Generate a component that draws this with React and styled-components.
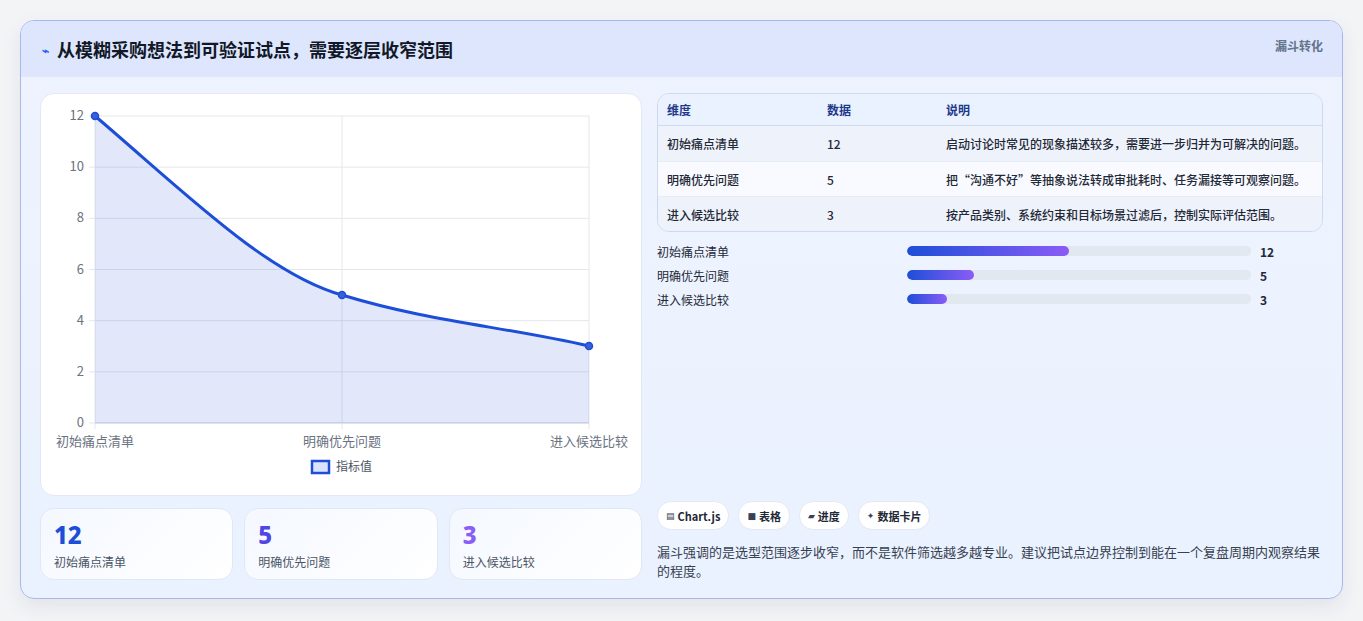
import React from "react";
import styled, { createGlobalStyle } from "styled-components";

const Global = createGlobalStyle`
  body { margin: 0; background: #f3f4f6; font-family: "Noto Sans CJK SC", "Noto Sans", sans-serif; }
`;

const Page = styled.div`
  padding: 20px 20px 21px;
  height: 621px;
  box-sizing: border-box;
`;

const Card = styled.div`
  border: 1px solid #a9b8ec;
  border-radius: 14px;
  overflow: hidden;
  background: linear-gradient(180deg, #eef3fe 0%, #eaf2ff 100%);
  box-shadow: 0 8px 20px rgba(30, 40, 90, 0.08);
  height: 579px;
  box-sizing: border-box;
`;

const Header = styled.div`
  height: 56px;
  background: #dde6fd;
  display: flex;
  align-items: center;
  justify-content: space-between;
  padding: 0 19px 0 21px;
  position: relative;
`;

const Title = styled.h1`
  margin: 0;
  font-size: 18px;
  font-weight: 700;
  color: #111827;
  display: flex;
  align-items: center;
  gap: 8px;
`;

const Tag = styled.span`
  font-size: 12px;
  font-weight: 700;
  color: #64748b;
  position: absolute;
  right: 19px;
  top: 16px;
`;

const Body = styled.div`
  display: grid;
  grid-template-columns: 602px 1fr;
  gap: 15px;
  padding: 16px 19px 18px 19px;
  height: 505px;
  box-sizing: border-box;
`;

const Col = styled.div`
  display: flex;
  flex-direction: column;
`;

const ChartCard = styled.div`
  background: #fff;
  border: 1px solid #e3e8f4;
  border-radius: 14px;
  height: 403px;
  box-sizing: border-box;
`;

const Stats = styled.div`
  display: grid;
  grid-template-columns: repeat(3, 1fr);
  gap: 11px;
  margin-top: 12px;
`;

const Stat = styled.div`
  background: linear-gradient(135deg, #f4f8ff, #ffffff);
  border: 1px solid #e1e8f5;
  border-radius: 14px;
  height: 72px;
  box-sizing: border-box;
  padding: 12px 13px;
`;

const StatNum = styled.div`
  font-size: 24px;
  font-weight: 800;
  line-height: 28px;
  color: ${(p) => p.c};
  font-family: "Noto Sans", sans-serif;
`;

const StatLabel = styled.div`
  font-size: 12px;
  color: #4b5563;
  margin-top: 4px;
`;

const Table = styled.table`
  width: 100%;
  border-collapse: separate;
  border-spacing: 0;
  border: 1px solid #cfd9ee;
  border-radius: 12px;
  overflow: hidden;
  font-size: 12px;
  color: #1f2937;
  th {
    text-align: left;
    font-weight: 700;
    color: #1e3a8a;
    height: 31px;
    padding: 0 9px;
    background: #eaf1ff;
    border-bottom: 1px solid #cfd9ee;
  }
  td {
    height: 34px;
    padding: 0 9px;
    font-weight: 500;
    border-top: 1px solid #e6ecf6;
  }
  tr:first-child td { border-top: none; height: 35px; }
  tr:nth-child(odd) td { background: #eef2fb; }
  tr:nth-child(even) td { background: #f8faff; }
`;

const Bars = styled.div`
  display: flex;
  flex-direction: column;
  gap: 6px;
  margin-top: 10px;
`;

const BarRow = styled.div`
  display: grid;
  grid-template-columns: 250px 344px 1fr;
  align-items: center;
  font-size: 12px;
  height: 18px;
  color: #1f2937;
`;

const Track = styled.div`
  height: 10px;
  background: #e2e8f0;
  border-radius: 5px;
  overflow: hidden;
`;

const Fill = styled.div`
  height: 100%;
  border-radius: 5px;
  background: linear-gradient(90deg, #1d4ed8, #8b5cf6);
`;

const BarVal = styled.span`
  font-weight: 700;
  padding-left: 9px;
`;

const Chips = styled.div`
  display: flex;
  gap: 9px;
  margin-top: auto;
`;

const Chip = styled.span`
  background: #fff;
  border: 1px solid #e3e8f3;
  border-radius: 14px;
  padding: 0 8px;
  height: 27px;
  display: flex;
  align-items: center;
  font-size: 11px;
  font-weight: 700;
  color: #1f2937;
  gap: 3px;
`;

const ChipIcon = styled.span`
  font-size: 9px;
  color: #374151;
  font-family: "DejaVu Sans", sans-serif;
`;

const Note = styled.p`
  margin: 12px 0 0;
  font-size: 13px;
  line-height: 19px;
  color: #374151;
`;

const rows = [
  ["初始痛点清单", 12, "启动讨论时常见的现象描述较多，需要进一步归并为可解决的问题。"],
  ["明确优先问题", 5, "把“沟通不好”等抽象说法转成审批耗时、任务漏接等可观察问题。"],
  ["进入候选比较", 3, "按产品类别、系统约束和目标场景过滤后，控制实际评估范围。"],
];

const yTicks = [0, 2, 4, 6, 8, 10, 12];
const yOf = (v) => 329 - (v / 12) * 307;

function Chart() {
  const axis = { fontSize: 13, fill: "#6b7280", fontFamily: "Noto Sans CJK SC, sans-serif" };
  return (
    <svg width="600" height="401" viewBox="0 0 600 401">
      {yTicks.map((v) => (
        <g key={v}>
          <line x1="48" x2="548" y1={yOf(v)} y2={yOf(v)} stroke="#e5e7eb" />
          <text x="43" y={yOf(v) + 4} textAnchor="end" {...axis}>{v}</text>
        </g>
      ))}
      {[54, 301, 548].map((x) => (
        <line key={x} x1={x} x2={x} y1="22" y2="335" stroke="#e5e7eb" />
      ))}
      <line x1="54" x2="548" y1="329" y2="329" stroke="#cbd5e1" />
      <path
        d="M54,22 C140,95 225,180 301,201 C390,228 460,232 548,252 L548,329 L54,329 Z"
        fill="rgba(29,78,216,0.13)"
      />
      <path
        d="M54,22 C140,95 225,180 301,201 C390,228 460,232 548,252"
        fill="none"
        stroke="#1d4ed8"
        strokeWidth="3"
      />
      {[[54, 22], [301, 201], [548, 252]].map(([x, y]) => (
        <circle key={x} cx={x} cy={y} r="3.5" fill="#3b5fd8" stroke="#1d4ed8" strokeWidth="1.5" />
      ))}
      <text x="54" y="352" textAnchor="middle" {...axis}>初始痛点清单</text>
      <text x="301" y="352" textAnchor="middle" {...axis}>明确优先问题</text>
      <text x="548" y="352" textAnchor="middle" {...axis}>进入候选比较</text>
      <rect x="271" y="367" width="17" height="12" fill="#dbe3fa" stroke="#1d4ed8" strokeWidth="2.5" />
      <text x="295" y="377" {...axis} fontSize="12" fill="#4b5563">指标值</text>
    </svg>
  );
}

export default function App() {
  return (
    <Page>
      <Global />
      <Card>
        <Header>
          <Title>
            <span style={{ color: "#2563eb", fontSize: 12 }}>⌁</span>
            从模糊采购想法到可验证试点，需要逐层收窄范围
          </Title>
          <Tag>漏斗转化</Tag>
        </Header>
        <Body>
          <Col>
            <ChartCard>
              <Chart />
            </ChartCard>
            <Stats>
              <Stat>
                <StatNum c="#1d4ed8">12</StatNum>
                <StatLabel>初始痛点清单</StatLabel>
              </Stat>
              <Stat>
                <StatNum c="#4f46e5">5</StatNum>
                <StatLabel>明确优先问题</StatLabel>
              </Stat>
              <Stat>
                <StatNum c="#8b5cf6">3</StatNum>
                <StatLabel>进入候选比较</StatLabel>
              </Stat>
            </Stats>
          </Col>
          <Col>
            <Table>
              <colgroup>
                <col style={{ width: 160 }} />
                <col style={{ width: 119 }} />
                <col />
              </colgroup>
              <thead>
                <tr><th>维度</th><th>数据</th><th>说明</th></tr>
              </thead>
              <tbody>
                {rows.map((r) => (
                  <tr key={r[0]}><td>{r[0]}</td><td>{r[1]}</td><td>{r[2]}</td></tr>
                ))}
              </tbody>
            </Table>
            <Bars>
              {rows.map((r) => (
                <BarRow key={r[0]}>
                  <span>{r[0]}</span>
                  <Track><Fill style={{ width: `${(r[1] / 12) * 47}%` }} /></Track>
                  <BarVal>{r[1]}</BarVal>
                </BarRow>
              ))}
            </Bars>
            <Chips>
              <Chip><ChipIcon>▤</ChipIcon>Chart.js</Chip>
              <Chip><ChipIcon>■</ChipIcon>表格</Chip>
              <Chip><ChipIcon>▰</ChipIcon>进度</Chip>
              <Chip><ChipIcon>✦</ChipIcon>数据卡片</Chip>
            </Chips>
            <Note>漏斗强调的是选型范围逐步收窄，而不是软件筛选越多越专业。建议把试点边界控制到能在一个复盘周期内观察结果的程度。</Note>
          </Col>
        </Body>
      </Card>
    </Page>
  );
}
